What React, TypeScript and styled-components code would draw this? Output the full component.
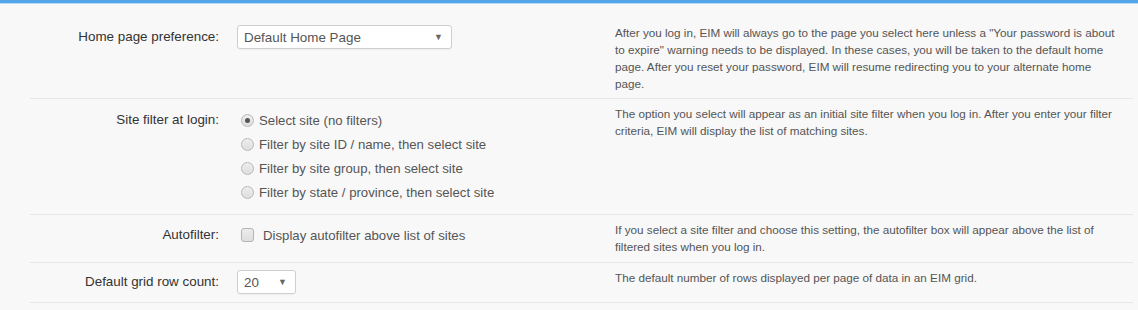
import styled, { createGlobalStyle } from "styled-components";

const GlobalStyle = createGlobalStyle`
	body {
		margin: 0;
		background: #f8f8f8;
		font-family: "Liberation Sans", Arial, sans-serif;
	}
`;

const siteFilters = [
	"Select site (no filters)",
	"Filter by site ID / name, then select site",
	"Filter by site group, then select site",
	"Filter by state / province, then select site",
];

const App = () => {
	return (
		<>
			<GlobalStyle />
			<TopBar />
			<Page>
				<Row $pb={6}>
					<Label $offset={1}>Home page preference:</Label>
					<Control $offset={1}>
						<Select $width={215}>
							<span>Default Home Page</span>
							<Arrow>▼</Arrow>
						</Select>
					</Control>
					<Help>
						After you log in, EIM will always go to the page you select here unless a "Your password is about
						to expire" warning needs to be displayed. In these cases, you will be taken to the default home
						page. After you reset your password, EIM will resume redirecting you to your alternate home
						page.
					</Help>
				</Row>

				<Row $pb={10}>
					<Label $offset={3}>Site filter at login:</Label>
					<Control $offset={3}>
						{siteFilters.map((option, i) => (
							<Option key={option}>
								<Radio $checked={i === 0} />
								{option}
							</Option>
						))}
					</Control>
					<Help>
						The option you select will appear as an initial site filter when you log in. After you enter your filter
						criteria, EIM will display the list of matching sites.
					</Help>
				</Row>

				<Row $pb={7}>
					<Label $offset={2}>Autofilter:</Label>
					<Control $offset={2}>
						<Option>
							<Checkbox />
							Display autofilter above list of sites
						</Option>
					</Control>
					<Help>
						If you select a site filter and choose this setting, the autofilter box will appear above the list of
						filtered sites when you log in.
					</Help>
				</Row>

				<Row $pb={8}>
					<Label $offset={1}>Default grid row count:</Label>
					<Control $offset={1}>
						<Select $width={59}>
							<span>20</span>
							<Arrow>▼</Arrow>
						</Select>
					</Control>
					<Help>The default number of rows displayed per page of data in an EIM grid.</Help>
				</Row>
			</Page>
		</>
	);
};

export default App;

const TopBar = styled.div`
	height: 3px;
	background: #52a5e8;
	border-bottom: 1px solid #b9daf5;
`;

const Page = styled.div`
	padding: 14px 5px 0 30px;
`;

const Row = styled.div<{ $pb: number }>`
	display: grid;
	grid-template-columns: 189px 360px 1fr;
	column-gap: 18px;
	align-items: start;
	padding: 6px 0 ${({ $pb }) => $pb}px;
	border-bottom: 1px solid #e7e7e7;
`;

const Label = styled.div<{ $offset: number }>`
	padding-top: ${({ $offset }) => $offset}px;
	text-align: right;
	font-size: 13.4px;
	line-height: 24px;
	color: #333;
`;

const Control = styled.div<{ $offset: number }>`
	padding-top: ${({ $offset }) => $offset}px;
	display: flex;
	flex-direction: column;
`;

const Help = styled.div`
	font-size: 11.7px;
	line-height: 17px;
	color: #555;
	padding-right: 12px;
`;

const Select = styled.div<{ $width: number }>`
	box-sizing: border-box;
	width: ${({ $width }) => $width}px;
	height: 24px;
	display: flex;
	align-items: center;
	justify-content: space-between;
	padding: 0 8px 0 6px;
	background: #fff;
	border: 1px solid #cfcfcf;
	border-radius: 3px;
	box-shadow: 0 1px 1px rgba(0, 0, 0, 0.04);
	font-size: 13.4px;
	color: #555;
`;

const Arrow = styled.span`
	font-size: 9px;
	color: #666;
`;

const Option = styled.label`
	display: flex;
	align-items: center;
	height: 24px;
	font-size: 13.2px;
	color: #555;
	white-space: nowrap;
`;

const Radio = styled.span<{ $checked: boolean }>`
	box-sizing: border-box;
	width: 13px;
	height: 13px;
	margin: 0 5px 0 4px;
	border-radius: 50%;
	border: 1px solid #b8b8b8;
	background: linear-gradient(#eeeeee, #dedede);
	display: flex;
	align-items: center;
	justify-content: center;

	&::after {
		content: "";
		width: 5px;
		height: 5px;
		border-radius: 50%;
		background: #555;
		display: ${({ $checked }) => ($checked ? "block" : "none")};
	}
`;

const Checkbox = styled.span`
	box-sizing: border-box;
	width: 13px;
	height: 14px;
	margin: 0 9px 0 4px;
	border-radius: 3px;
	border: 1px solid #b4b4b4;
	background: linear-gradient(#ececec, #dedede);
`;
